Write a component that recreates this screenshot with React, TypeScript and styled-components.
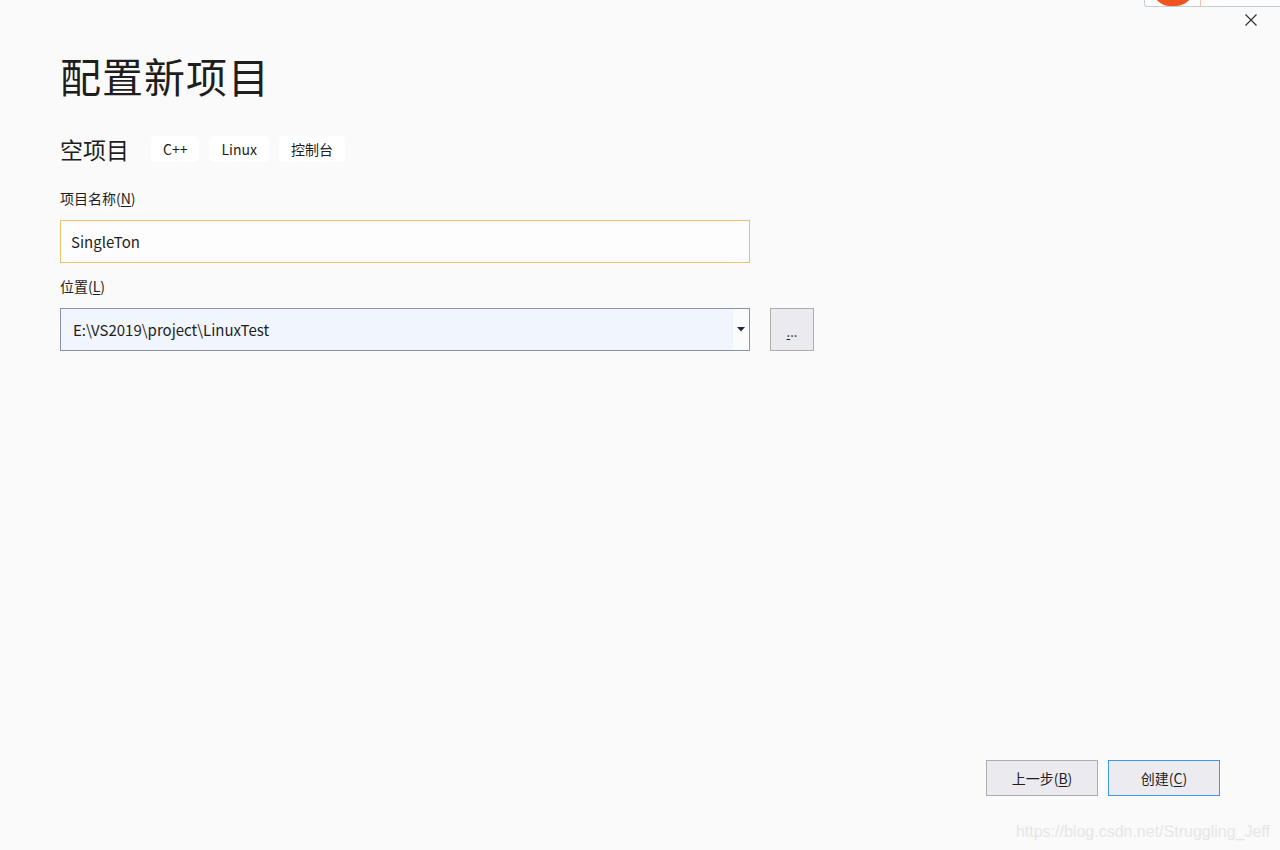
import styled, { createGlobalStyle } from 'styled-components';

const Global = createGlobalStyle`
  html, body {
    margin: 0;
    padding: 0;
    background: #fafafa;
  }
  body {
    font-family: "Noto Sans CJK SC", "Noto Sans", sans-serif;
    color: #1e1e1e;
  }
`;

const Window = styled.div`
  position: relative;
  width: 1280px;
  height: 850px;
  background: #fafafa;
  display: flex;
  flex-direction: column;
  box-sizing: border-box;
  overflow: hidden;
`;

const Stray = styled.div`
  position: absolute;
  top: -2px;
  left: 1144px;
  width: 140px;
  height: 8px;
  border: 1px solid #c3ccd4;
  border-top: none;
  border-radius: 0 0 3px 3px;
  background: #fdfdfd;
  overflow: hidden;
`;

const StrayBlob = styled.div`
  position: absolute;
  left: 8px;
  top: -12px;
  width: 42px;
  height: 20px;
  border-radius: 0 0 24px 20px;
  background: #f0541e;
`;

const StrayLine = styled.div`
  position: absolute;
  left: 55px;
  top: 0;
  width: 1px;
  height: 8px;
  background: #f5c2b4;
`;

const TopBar = styled.div`
  display: flex;
  justify-content: flex-end;
  padding: 13px 22px 0 0;
  height: 14px;
`;

const Close = styled.button`
  border: none;
  background: none;
  padding: 0;
  width: 14px;
  height: 14px;
  display: flex;
  cursor: pointer;
`;

const Content = styled.div`
  display: flex;
  flex-direction: column;
  padding: 0 60px;
  flex: 1;
`;

const Title = styled.h1`
  margin: 20px 0 0;
  font-size: 41px;
  font-weight: 400;
  line-height: 56px;
  letter-spacing: 1px;
  color: #1e1e1e;
`;

const SubRow = styled.div`
  display: flex;
  align-items: center;
  gap: 10px;
  margin-top: 31px;
`;

const SubTitle = styled.span`
  font-size: 23px;
  line-height: 30px;
  margin-right: 12px;
`;

const Tag = styled.span`
  background: #fff;
  border-radius: 5px;
  height: 26px;
  padding: 0 12px;
  display: flex;
  align-items: center;
  font-size: 14px;
  color: #1e1e1e;
`;

const Label = styled.label<{ $top: number }>`
  display: block;
  font-size: 14px;
  line-height: 20px;
  margin-top: ${(p) => p.$top}px;
  color: #1e1e1e;

  u {
    text-underline-offset: 2px;
  }
`;

const FieldRow = styled.div`
  display: flex;
  align-items: center;
  gap: 20px;
  margin-top: 12px;
`;

const NameInput = styled.div`
  width: 690px;
  height: 43px;
  box-sizing: border-box;
  border: 1px solid #e9c466;
  background: #fdfdfd;
  display: flex;
  align-items: center;
  padding-left: 10px;
  font-size: 15px;
`;

const Combo = styled.div`
  width: 690px;
  height: 43px;
  box-sizing: border-box;
  border: 1px solid #8893a8;
  background: #f1f5fd;
  display: flex;
  align-items: stretch;
`;

const ComboText = styled.div`
  flex: 1;
  display: flex;
  align-items: center;
  padding-left: 12px;
  font-size: 15px;
`;

const ComboArrow = styled.div`
  width: 16px;
  background: #fbfbfb;
  display: flex;
  align-items: center;
  justify-content: center;
`;

const Browse = styled.button`
  width: 44px;
  height: 43px;
  box-sizing: border-box;
  border: 1px solid #adadad;
  background: #ebebef;
  font-family: inherit;
  font-size: 13px;
  padding: 4px 0 0;
  color: #1e1e1e;

  u {
    text-underline-offset: 2px;
  }
`;

const Footer = styled.div`
  margin-top: auto;
  display: flex;
  justify-content: flex-end;
  gap: 10px;
  padding: 0 60px 0 0;
`;

const Button = styled.button<{ $primary?: boolean }>`
  width: 112px;
  height: 36px;
  box-sizing: border-box;
  border: 1px solid ${(p) => (p.$primary ? '#3c99ee' : '#adadad')};
  background: ${(p) => (p.$primary ? '#ececf0' : '#ebebef')};
  font-family: inherit;
  font-size: 14px;
  color: #1e1e1e;
  padding: 0;

  u {
    text-underline-offset: 2px;
  }
`;

const Watermark = styled.div`
  display: flex;
  justify-content: flex-end;
  padding: 27px 10px 9px 0;
  font-family: "Liberation Sans", Arial, sans-serif;
  font-size: 16px;
  color: #e6e6e6;
`;

export default function App() {
  return (
    <>
      <Global />
      <Window>
        <Stray>
          <StrayBlob />
          <StrayLine />
        </Stray>
        <TopBar>
          <Close aria-label="关闭">
            <svg width="14" height="14" viewBox="0 0 14 14">
              <path d="M1.5 1.5 L12.5 12.5 M12.5 1.5 L1.5 12.5" stroke="#333" strokeWidth="1.2" />
            </svg>
          </Close>
        </TopBar>
        <Content>
          <Title>配置新项目</Title>
          <SubRow>
            <SubTitle>空项目</SubTitle>
            <Tag>C++</Tag>
            <Tag>Linux</Tag>
            <Tag>控制台</Tag>
          </SubRow>
          <Label $top={24}>
            项目名称(<u>N</u>)
          </Label>
          <FieldRow>
            <NameInput>SingleTon</NameInput>
          </FieldRow>
          <Label $top={13}>
            位置(<u>L</u>)
          </Label>
          <FieldRow>
            <Combo>
              <ComboText>E:\VS2019\project\LinuxTest</ComboText>
              <ComboArrow>
                <svg width="8" height="5" viewBox="0 0 8 5">
                  <path d="M0 0 H8 L4 4.5 Z" fill="#1e2a3c" />
                </svg>
              </ComboArrow>
            </Combo>
            <Browse>
              <u>.</u>..
            </Browse>
          </FieldRow>
        </Content>
        <Footer>
          <Button>
            上一步(<u>B</u>)
          </Button>
          <Button $primary>
            创建(<u>C</u>)
          </Button>
        </Footer>
        <Watermark>https://blog.csdn.net/Struggling_Jeff</Watermark>
      </Window>
    </>
  );
}
